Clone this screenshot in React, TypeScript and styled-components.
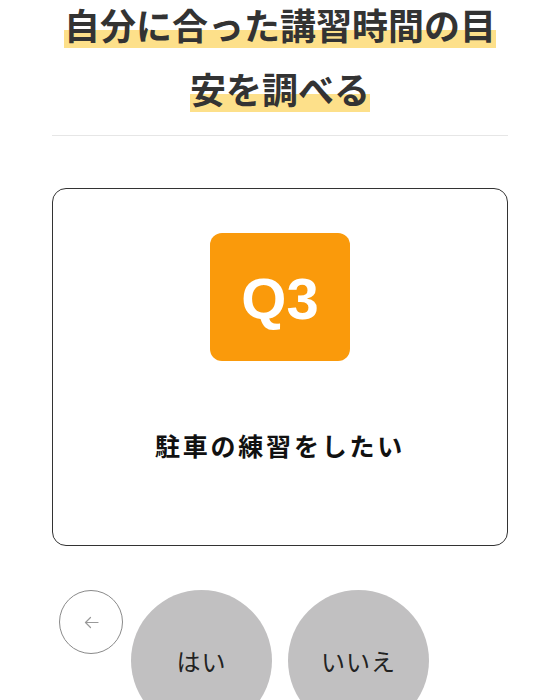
import styled, { createGlobalStyle } from "styled-components";

const GlobalStyle = createGlobalStyle`
  html, body {
    margin: 0;
    padding: 0;
    background: #fff;
  }
  body {
    font-family: "Noto Sans CJK JP", "Noto Sans", sans-serif;
    overflow: hidden;
  }
`;

const Page = styled.div`
  width: 560px;
  height: 700px;
  overflow: hidden;
  padding: 0 52px;
  box-sizing: border-box;
`;

const Title = styled.h1`
  margin: 0;
  padding: 6px 0 23px;
  display: flex;
  flex-direction: column;
  align-items: center;
  gap: 22px;
  font-size: 36px;
  font-weight: 700;
  color: #333;
  border-bottom: 1px solid #e6e6e6;
`;

const Marker = styled.span`
  display: block;
  line-height: 36px;
  padding-bottom: 6px;
  white-space: nowrap;
  background: linear-gradient(transparent 56%, #fde08a 56%);
`;

const Card = styled.section`
  margin-top: 52px;
  height: 358px;
  box-sizing: border-box;
  border: 1.5px solid #333;
  border-radius: 14px;
  padding-top: 44px;
  display: flex;
  flex-direction: column;
  align-items: center;
`;

const QBadge = styled.div`
  width: 140px;
  height: 128px;
  border-radius: 12px;
  background: #fa9a0b;
  color: #fff;
  display: flex;
  align-items: center;
  justify-content: center;
  font-family: "Liberation Sans", Arial, sans-serif;
  font-weight: 700;
  font-size: 58px;
  padding-top: 2px;
  box-sizing: border-box;
`;

const Question = styled.p`
  margin: 66px 0 0;
  font-size: 25px;
  line-height: 37px;
  font-weight: 700;
  letter-spacing: 2.8px;
  color: #111;
`;

const Actions = styled.div`
  margin-top: 44px;
  margin-left: 7px;
  display: flex;
  align-items: flex-start;
`;

const BackButton = styled.button`
  width: 64px;
  height: 64px;
  border-radius: 50%;
  border: 1px solid #8a8a8a;
  background: #fff;
  color: #999;
  display: flex;
  align-items: center;
  justify-content: center;
  padding: 0;
  margin-right: 8px;
  cursor: pointer;
`;

const Answer = styled.button<{ $gap?: number }>`
  width: 141px;
  height: 141px;
  margin-left: ${(p) => p.$gap ?? 0}px;
  border-radius: 50%;
  border: none;
  background: #c1c0c1;
  color: #222;
  font-family: "Noto Sans CJK JP", "Noto Sans", sans-serif;
  font-size: 24px;
  font-weight: 400;
  letter-spacing: 1px;
  padding: 0;
  cursor: pointer;
`;

export default function App() {
  return (
    <Page>
      <GlobalStyle />
      <Title>
        <Marker>自分に合った講習時間の目</Marker>
        <Marker>安を調べる</Marker>
      </Title>

      <Card>
        <QBadge>Q3</QBadge>
        <Question>駐車の練習をしたい</Question>
      </Card>

      <Actions>
        <BackButton aria-label="戻る">
          <svg width="15" height="13" viewBox="0 0 15 13" fill="none" stroke="currentColor" strokeWidth="1.2" strokeLinecap="round" strokeLinejoin="round">
            <path d="M14 6.5H1.5" />
            <path d="M6.5 1.5L1.5 6.5l5 5" />
          </svg>
        </BackButton>
        <Answer>はい</Answer>
        <Answer $gap={16}>いいえ</Answer>
      </Actions>
    </Page>
  );
}
